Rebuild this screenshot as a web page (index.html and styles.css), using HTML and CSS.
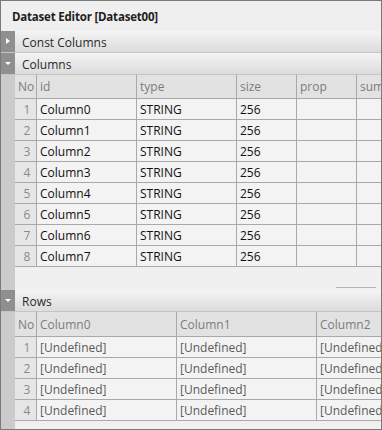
FILE: index.html
```html
<!DOCTYPE html>
<html lang="en">
<head>
    <meta charset="UTF-8">
    <title>Dataset Editor</title>
    <link rel="stylesheet" href="styles.css">
</head>
<body>
    <div class="editor">
        <div class="title">Dataset Editor [Dataset00]</div>

        <div class="section-head">
            <div class="toggle"><span class="tri-r"></span></div>
            <div class="label">Const Columns</div>
        </div>

        <div class="section-head">
            <div class="toggle"><span class="tri-d"></span></div>
            <div class="label">Columns</div>
        </div>
        <div class="section-body cols-body">
            <div class="gutter"></div>
            <div class="grid cols">
                <div class="row head">
                    <div class="no">No</div>
                    <div class="c-id">id</div>
                    <div class="c-type">type</div>
                    <div class="c-size">size</div>
                    <div class="c-prop">prop</div>
                    <div class="c-sum">sum</div>
                </div>
                <div class="row"><div class="no">1</div><div class="c-id">Column0</div><div class="c-type">STRING</div><div class="c-size">256</div><div class="c-prop"></div><div class="c-sum"></div></div>
                <div class="row"><div class="no">2</div><div class="c-id">Column1</div><div class="c-type">STRING</div><div class="c-size">256</div><div class="c-prop"></div><div class="c-sum"></div></div>
                <div class="row"><div class="no">3</div><div class="c-id">Column2</div><div class="c-type">STRING</div><div class="c-size">256</div><div class="c-prop"></div><div class="c-sum"></div></div>
                <div class="row"><div class="no">4</div><div class="c-id">Column3</div><div class="c-type">STRING</div><div class="c-size">256</div><div class="c-prop"></div><div class="c-sum"></div></div>
                <div class="row"><div class="no">5</div><div class="c-id">Column4</div><div class="c-type">STRING</div><div class="c-size">256</div><div class="c-prop"></div><div class="c-sum"></div></div>
                <div class="row"><div class="no">6</div><div class="c-id">Column5</div><div class="c-type">STRING</div><div class="c-size">256</div><div class="c-prop"></div><div class="c-sum"></div></div>
                <div class="row"><div class="no">7</div><div class="c-id">Column6</div><div class="c-type">STRING</div><div class="c-size">256</div><div class="c-prop"></div><div class="c-sum"></div></div>
                <div class="row"><div class="no">8</div><div class="c-id">Column7</div><div class="c-type">STRING</div><div class="c-size">256</div><div class="c-prop"></div><div class="c-sum"></div></div>
                <div class="blank">
                    <div class="hscroll"></div>
                </div>
            </div>
        </div>

        <div class="section-head">
            <div class="toggle"><span class="tri-d"></span></div>
            <div class="label">Rows</div>
        </div>
        <div class="section-body rows-body">
            <div class="gutter"></div>
            <div class="grid rows">
                <div class="row head">
                    <div class="no">No</div>
                    <div class="c-col">Column0</div>
                    <div class="c-col">Column1</div>
                    <div class="c-last">Column2</div>
                </div>
                <div class="row"><div class="no">1</div><div class="c-col undef">[Undefined]</div><div class="c-col undef">[Undefined]</div><div class="c-last undef">[Undefined]</div></div>
                <div class="row"><div class="no">2</div><div class="c-col undef">[Undefined]</div><div class="c-col undef">[Undefined]</div><div class="c-last undef">[Undefined]</div></div>
                <div class="row"><div class="no">3</div><div class="c-col undef">[Undefined]</div><div class="c-col undef">[Undefined]</div><div class="c-last undef">[Undefined]</div></div>
                <div class="row"><div class="no">4</div><div class="c-col undef">[Undefined]</div><div class="c-col undef">[Undefined]</div><div class="c-last undef">[Undefined]</div></div>
                <div class="blank short"></div>
            </div>
        </div>
    </div>
</body>
</html>
```

FILE: styles.css
```css
* {
    margin: 0;
    padding: 0;
    box-sizing: border-box;
}

body {
    background: #fff;
    font-family: "Open Sans", "Noto Sans", sans-serif;
    font-size: 12px;
    color: #111;
}

.editor {
    width: 382px;
    height: 430px;
    border: 1px solid #7a7a7a;
    background: #f0f0f0;
    display: flex;
    flex-direction: column;
    overflow: hidden;
}

.title {
    height: 30px;
    padding-left: 11px;
    line-height: 31px;
    font-weight: bold;
    font-size: 11.5px;
    color: #1e1e1e;
    background: #efefef;
    letter-spacing: -0.2px;
}

/* section header bars */
.section-head {
    display: flex;
    height: 22px;
    border-bottom: 1px solid #c4c4c4;
}

.toggle {
    width: 14px;
    background: #8f8f8f;
    position: relative;
}

.tri-r {
    position: absolute;
    left: 5px;
    top: 7px;
    border-left: 4px solid #fff;
    border-top: 3px solid transparent;
    border-bottom: 3px solid transparent;
}

.tri-d {
    position: absolute;
    left: 4px;
    top: 9px;
    border-top: 3px solid #fff;
    border-left: 3px solid transparent;
    border-right: 3px solid transparent;
}

.label {
    flex: 1;
    padding-left: 7px;
    line-height: 23px;
    color: #2a2a2a;
    background: linear-gradient(#f4f4f4, #dcdcdc);
}

.section-body {
    display: flex;
}

.gutter {
    width: 14px;
    background: #cbcbcb;
}

.grid {
    flex: 1;
    overflow: hidden;
    background: #f0f0f0;
}

.row {
    display: flex;
    height: 21px;
    border-bottom: 1px solid #a9a9a9;
    line-height: 21px;
    white-space: nowrap;
}

.row > div {
    flex: none;
    border-right: 1px solid #a9a9a9;
    padding-left: 3px;
    background: #f3f3f3;
    overflow: hidden;
}

.row .no {
    width: 22px;
    padding: 0 0 0 3px;
    text-align: center;
    color: #8a8a8a;
    background: #e6e6e6;
}

.row.head {
    height: 24px;
    line-height: 24px;
}

.rows .row.head {
    height: 25px;
    line-height: 25px;
}

.row.head > div {
    color: #7c7c7c;
    background: #e2e2e2;
    text-align: left;
}

.c-id,
.c-type {
    width: 100px;
}

.c-size,
.c-prop {
    width: 60px;
}

.c-sum {
    width: 60px;
}

.c-col {
    width: 140px;
}

.c-last {
    width: 90px;
}

.undef {
    color: #5a5a5a;
}

.blank {
    height: 23px;
    position: relative;
}

.blank.short {
    height: 8px;
}

.hscroll {
    position: absolute;
    left: 321px;
    top: 20px;
    width: 40px;
    height: 1px;
    background: #b5b5b5;
}
```
